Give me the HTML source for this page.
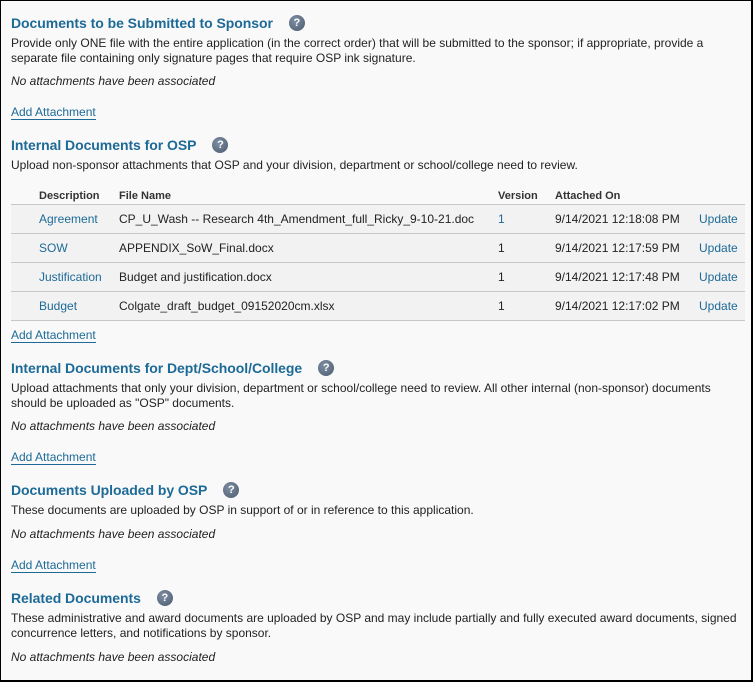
<!DOCTYPE html>
<html><head><meta charset="utf-8"><style>
html,body{margin:0;padding:0}
body{width:753px;height:682px;position:relative;overflow:hidden;font-family:"Liberation Sans",Arial,sans-serif;font-size:12px;color:#222;background:#fff}
.frame{position:absolute;left:0;top:0;width:750px;height:679px;border:1px solid #000;border-right:2px solid #000;border-bottom:2px solid #000;background:#f9f9f9}
.a{position:absolute;white-space:nowrap;line-height:15px;margin-top:1px}
h2{position:absolute;margin:1px 0 0 0;font-size:14px;font-weight:bold;color:#1d6a97;line-height:16px;white-space:nowrap;letter-spacing:-0.05px}
.q{display:inline-block;width:16px;height:16px;border-radius:50%;background:radial-gradient(circle at 40% 35%,#7f8fa3,#4b5a6e);color:#fff;font-size:11px;font-weight:bold;text-align:center;line-height:16px;vertical-align:middle;margin-left:16px;position:relative;top:-1px}
.i{font-style:italic}
.link{color:#1d6a97;border-bottom:1px solid #1d6a97;line-height:14px}
.row{position:absolute;left:11px;width:734px;height:28px;background:#f2f2f2;border-bottom:1px solid #c4c8cb}
.lk{color:#1d6a97}
</style></head><body>
<div class="frame"></div>
<h2 style="left:11px;top:14px">Documents to be Submitted to Sponsor<span class="q">?</span></h2>
<div class="a" style="left:11px;top:35px">Provide only ONE file with the entire application (in the correct order) that will be submitted to the sponsor; if appropriate, provide a</div>
<div class="a" style="left:11px;top:50px">separate file containing only signature pages that require OSP ink signature.</div>
<div class="a i" style="left:11px;top:73px">No attachments have been associated</div>
<div class="a link" style="left:11px;top:104px">Add Attachment</div>

<h2 style="left:11px;top:136px">Internal Documents for OSP<span class="q">?</span></h2>
<div class="a" style="left:11px;top:157px">Upload non-sponsor attachments that OSP and your division, department or school/college need to review.</div>
<div style="position:absolute;left:11px;top:204px;width:734px;border-top:1px solid #c4c8cb"></div>
<div class="a" style="left:39px;top:188px;font-weight:bold;color:#333;font-size:11px">Description</div>
<div class="a" style="left:119px;top:188px;font-weight:bold;color:#333;font-size:11px">File Name</div>
<div class="a" style="left:498px;top:188px;font-weight:bold;color:#333;font-size:11px">Version</div>
<div class="a" style="left:555px;top:188px;font-weight:bold;color:#333;font-size:11px">Attached On</div>
<div class="row" style="top:205px"></div>
<div class="row" style="top:234px"></div>
<div class="row" style="top:263px"></div>
<div class="row" style="top:292px"></div>
<div class="a lk" style="left:39px;top:211px">Agreement</div>
<div class="a" style="left:119px;top:211px">CP_U_Wash -- Research 4th_Amendment_full_Ricky_9-10-21.doc</div>
<div class="a lk" style="left:498px;top:211px">1</div>
<div class="a" style="left:555px;top:211px">9/14/2021 12:18:08 PM</div>
<div class="a lk" style="left:699px;top:211px">Update</div>
<div class="a lk" style="left:39px;top:240px">SOW</div>
<div class="a" style="left:119px;top:240px">APPENDIX_SoW_Final.docx</div>
<div class="a" style="left:498px;top:240px">1</div>
<div class="a" style="left:555px;top:240px">9/14/2021 12:17:59 PM</div>
<div class="a lk" style="left:699px;top:240px">Update</div>
<div class="a lk" style="left:39px;top:269px">Justification</div>
<div class="a" style="left:119px;top:269px">Budget and justification.docx</div>
<div class="a" style="left:498px;top:269px">1</div>
<div class="a" style="left:555px;top:269px">9/14/2021 12:17:48 PM</div>
<div class="a lk" style="left:699px;top:269px">Update</div>
<div class="a lk" style="left:39px;top:298px">Budget</div>
<div class="a" style="left:119px;top:298px">Colgate_draft_budget_09152020cm.xlsx</div>
<div class="a" style="left:498px;top:298px">1</div>
<div class="a" style="left:555px;top:298px">9/14/2021 12:17:02 PM</div>
<div class="a lk" style="left:699px;top:298px">Update</div>
<div class="a link" style="left:11px;top:327px">Add Attachment</div>

<h2 style="left:11px;top:359px">Internal Documents for Dept/School/College<span class="q">?</span></h2>
<div class="a" style="left:11px;top:380px">Upload attachments that only your division, department or school/college need to review. All other internal (non-sponsor) documents</div>
<div class="a" style="left:11px;top:395px">should be uploaded as "OSP" documents.</div>
<div class="a i" style="left:11px;top:418px">No attachments have been associated</div>
<div class="a link" style="left:11px;top:449px">Add Attachment</div>

<h2 style="left:11px;top:481px">Documents Uploaded by OSP<span class="q">?</span></h2>
<div class="a" style="left:11px;top:502px">These documents are uploaded by OSP in support of or in reference to this application.</div>
<div class="a i" style="left:11px;top:526px">No attachments have been associated</div>
<div class="a link" style="left:11px;top:557px">Add Attachment</div>

<h2 style="left:11px;top:589px">Related Documents<span class="q">?</span></h2>
<div class="a" style="left:11px;top:610px">These administrative and award documents are uploaded by OSP and may include partially and fully executed award documents, signed</div>
<div class="a" style="left:11px;top:625px">concurrence letters, and notifications by sponsor.</div>
<div class="a i" style="left:11px;top:649px">No attachments have been associated</div>
</body></html>
